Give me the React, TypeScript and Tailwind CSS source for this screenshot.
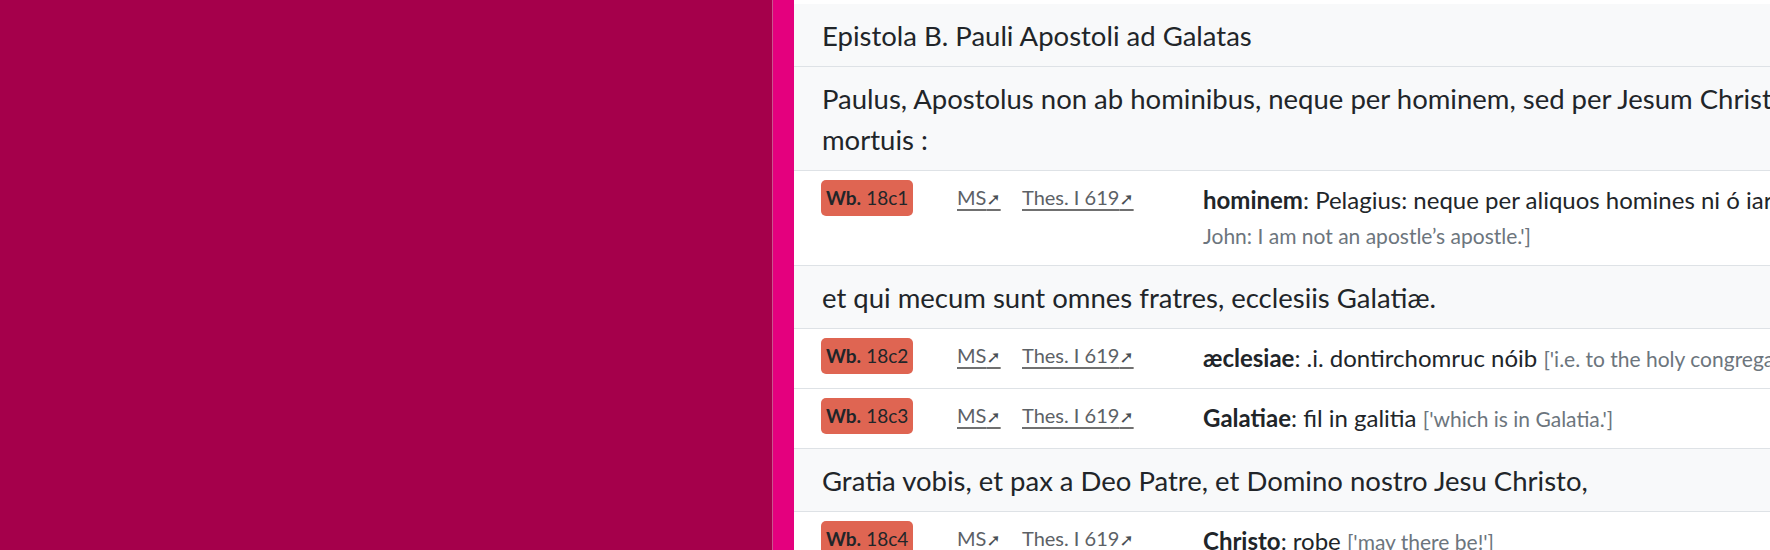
import React from "react";

type Gloss = {
  siglum: string;
  lemma: string;
  text: string;
  trans: React.ReactNode;
};

type Verse = {
  text: React.ReactNode;
  glosses: Gloss[];
};

const verses: Verse[] = [
  { text: "Epistola B. Pauli Apostoli ad Galatas", glosses: [] },
  {
    text: (
      <>
        Paulus, Apostolus non ab hominibus, neque per hominem, sed per Jesum Christum, et Deum Patrem, qui suscitavit eum a
        <br />
        mortuis :
      </>
    ),
    glosses: [
      {
        siglum: "18c1",
        lemma: "hominem",
        text: "Pelagius: neque per aliquos homines ni ó iarmóracht apstal ata apstalacht dom",
        trans: (
          <>
            ['Pelagius: nor through any men, i.e. my apostleship is not from the successorship of apostles; as said
            <br />
            John: I am not an apostle’s apostle.']
          </>
        ),
      },
    ],
  },
  {
    text: "et qui mecum sunt omnes fratres, ecclesiis Galatiæ.",
    glosses: [
      {
        siglum: "18c2",
        lemma: "æclesiae",
        text: ".i. dontirchomruc nóib",
        trans: "['i.e. to the holy congregation.']",
      },
      {
        siglum: "18c3",
        lemma: "Galatiae",
        text: "fil in galitia",
        trans: "['which is in Galatia.']",
      },
    ],
  },
  {
    text: "Gratia vobis, et pax a Deo Patre, et Domino nostro Jesu Christo,",
    glosses: [
      {
        siglum: "18c4",
        lemma: "Christo",
        text: "robe",
        trans: "['may there be!']",
      },
    ],
  },
];

function ExtLink({ label }: { label: string }) {
  return (
    <a href="#" className="text-[20px] text-[#5c6166] underline decoration-[#707070] underline-offset-[4px]">
      {label}
      <span className="font-['DejaVu_Sans',sans-serif] text-[17px] text-[#4a4f54]">➚</span>
    </a>
  );
}

function GlossRow({ gloss }: { gloss: Gloss }) {
  return (
    <div className="flex border-b border-[#dee2e6] bg-white pb-[13px] pl-[27px] pt-[9px]">
      <div className="w-[136px] shrink-0">
        <span className="inline-flex h-[36px] items-center rounded-[5px] bg-[#df6552] px-[5px] text-[19px] text-[#212529]">
          <b className="mr-[5px] font-bold">Wb.</b>
          {gloss.siglum}
        </span>
      </div>
      <div className="w-[65px] shrink-0 pt-[1px] leading-[32px]">
        <ExtLink label="MS" />
      </div>
      <div className="w-[181px] shrink-0 pt-[1px] leading-[32px]">
        <ExtLink label="Thes. I 619" />
      </div>
      <p className="flex-1 whitespace-nowrap pt-[2px] text-[24px] leading-[35px] text-[#212529]">
        <b className="font-bold">{gloss.lemma}</b>: {gloss.text}{" "}
        <span className="text-[21px] leading-none text-[#6c757d]">{gloss.trans}</span>
      </p>
    </div>
  );
}

export default function App() {
  return (
    <div className="flex h-[550px] w-[1770px] overflow-hidden font-['Lato','Liberation_Sans',sans-serif]">
      <div className="w-[772px] shrink-0 bg-[#a5004b]" />
      <div className="w-px shrink-0 bg-[#c8548c]" />
      <div className="w-[21px] shrink-0 bg-[#e4007e]" />
      <main className="flex-1 overflow-hidden bg-white pt-[4px]">
        <div className="w-[1700px]">
          {verses.map((verse, i) => (
            <section key={i}>
              <div className="border-b border-[#dee2e6] bg-[#f8f9fa] pb-[10px] pl-[28px] pt-[11px] text-[27.5px] leading-[41px] text-[#212529]">
                {verse.text}
              </div>
              {verse.glosses.map((g) => (
                <GlossRow key={g.siglum} gloss={g} />
              ))}
            </section>
          ))}
        </div>
      </main>
    </div>
  );
}
